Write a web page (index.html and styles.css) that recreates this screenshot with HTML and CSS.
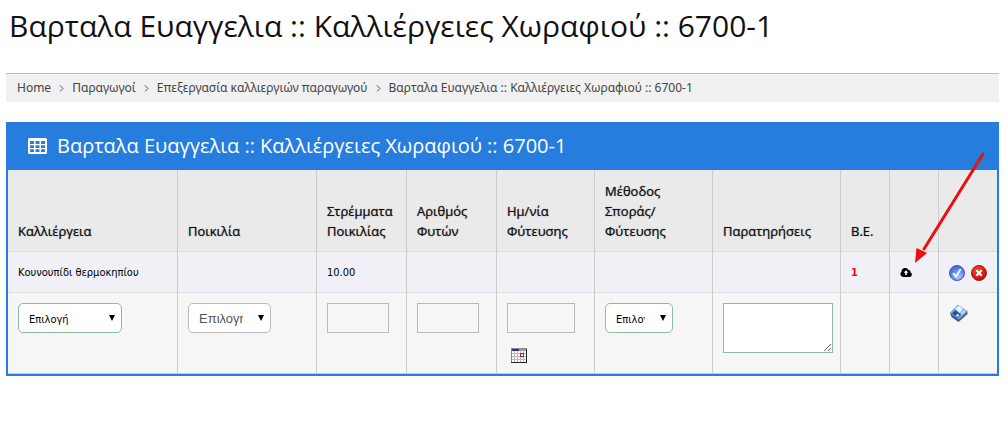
FILE: index.html
```html
<!DOCTYPE html>
<html lang="el">
<head>
<meta charset="utf-8">
<meta name="viewport" content="width=device-width, initial-scale=1">
<title>Βαρταλα Ευαγγελια :: Καλλιέργειες Χωραφιού :: 6700-1</title>
<link rel="stylesheet" href="styles.css">
</head>
<body>
<h1 class="page-title">Βαρταλα Ευαγγελια :: Καλλιέργειες Χωραφιού :: 6700-1</h1>
<nav class="breadcrumb" aria-label="Breadcrumb">
  <a href="#">Home</a>
  <svg class="chevron" viewBox="0 0 5 7"><path d="M1 .5 4 3.500 1 6.500"/></svg>
  <a href="#">Παραγωγοί</a>
  <svg class="chevron" viewBox="0 0 5 7"><path d="M1 .5 4 3.500 1 6.500"/></svg>
  <a href="#">Επεξεργασία καλλιεργιών παραγωγού</a>
  <svg class="chevron" viewBox="0 0 5 7"><path d="M1 .5 4 3.500 1 6.500"/></svg>
  <a href="#">Βαρταλα Ευαγγελια :: Καλλιέργειες Χωραφιού :: 6700-1</a>
</nav>
<section class="panel">
  <header class="panel-head">
    <svg class="table-icon" viewBox="0 0 19 16"><path fill="#fff" fill-rule="evenodd" d="M1.500 0h16A1.500 1.500 0 0 1 19 1.500v13a1.500 1.500 0 0 1-1.500 1.500h-16A1.500 1.500 0 0 1 0 14.500v-13A1.500 1.500 0 0 1 1.500 0ZM2 3v3h4V3ZM7.500 3v3h4V3ZM13 3v3h4V3ZM2 7.300v2.700h4V7.300ZM7.500 7.300v2.700h4V7.300ZM13 7.300v2.700h4V7.300ZM2 11.300v2.700h4v-2.700ZM7.500 11.300v2.700h4v-2.700ZM13 11.300v2.700h4v-2.700Z"/></svg>
    <h2 class="panel-title">Βαρταλα Ευαγγελια :: Καλλιέργειες Χωραφιού :: 6700-1</h2>
  </header>
  <table class="grid">
    <colgroup>
      <col class="c-crop"><col class="c-variety"><col class="c-num"><col class="c-num"><col class="c-date"><col class="c-method"><col class="c-notes"><col class="c-small"><col class="c-small"><col class="c-actions">
    </colgroup>
    <thead>
      <tr>
        <th scope="col">Καλλιέργεια</th>
        <th scope="col">Ποικιλία</th>
        <th scope="col">Στρέμματα Ποικιλίας</th>
        <th scope="col">Αριθμός Φυτών</th>
        <th scope="col">Ημ/νία Φύτευσης</th>
        <th scope="col">Μέθοδος Σποράς/ Φύτευσης</th>
        <th scope="col">Παρατηρήσεις</th>
        <th scope="col">Β.Ε.</th>
        <th></th>
        <th></th>
      </tr>
    </thead>
    <tbody>
      <tr class="row-data">
        <td>Κουνουπίδι θερμοκηπίου</td>
        <td></td>
        <td>10.00</td>
        <td></td>
        <td></td>
        <td></td>
        <td></td>
        <td class="alert">1</td>
        <td><button class="icon-btn" type="button" aria-label="Μεταφόρτωση"><svg width="12" height="10" viewBox="0 0 12 10"><path fill="#000" d="M3 9A3 3 0 0 1 1.500 3.700 3.700 3.700 0 0 1 8.500 2 2.300 2.300 0 0 1 10.600 4.500 2.400 2.400 0 0 1 9.600 9Z"/><path fill="#fff" d="M6 2.300 8.300 4.800H6.800V7H5.200V4.800H3.700Z"/></svg></button></td>
        <td>
          <div class="actions">
            <button class="icon-btn" type="button" aria-label="Επιβεβαίωση"><svg width="16" height="16" viewBox="0 0 16 16"><defs><radialGradient id="gb" cx=".6" cy=".75" r=".8"><stop offset="0" stop-color="#a9c4ff"/><stop offset=".6" stop-color="#5a82e6"/><stop offset="1" stop-color="#4264c8"/></radialGradient></defs><circle cx="8" cy="8" r="7.500" fill="url(#gb)" stroke="#3b58b4"/><path d="M4 8.300 7 11.500 11.700 4" fill="none" stroke="#eaf3ff" stroke-width="2"/></svg></button>
            <button class="icon-btn" type="button" aria-label="Διαγραφή"><svg width="16" height="16" viewBox="0 0 16 16"><defs><radialGradient id="gr" cx=".4" cy=".3" r=".8"><stop offset="0" stop-color="#ee4a30"/><stop offset=".6" stop-color="#d61e10"/><stop offset="1" stop-color="#a80c06"/></radialGradient></defs><circle cx="8" cy="8" r="7.500" fill="url(#gr)" stroke="#a31a10"/><path d="M5.300 5.300 10.700 10.700M10.700 5.300 5.300 10.700" stroke="#fff" stroke-width="2.200"/></svg></button>
          </div>
        </td>
      </tr>
      <tr class="row-form">
        <td><span class="select select-wide"><select aria-label="Καλλιέργεια"><option>Επιλογή</option></select></span></td>
        <td><span class="select select-muted"><select aria-label="Ποικιλία"><option>Επιλογή</option></select></span></td>
        <td><input class="field" type="text" aria-label="Στρέμματα Ποικιλίας"></td>
        <td><input class="field" type="text" aria-label="Αριθμός Φυτών"></td>
        <td>
          <input class="field field-date" type="text" aria-label="Ημ/νία Φύτευσης">
          <button class="icon-btn calendar" type="button" aria-label="Ημερολόγιο"><svg width="16" height="15" viewBox="0 0 16 15" shape-rendering="crispEdges"><path fill="#fff" d="M0 0h16v15H0z"/><path fill="#bcbcbc" d="M3 3h1v11H3zM6 3h1v11H6zM9 3h1v11H9zM12 3h1v11h-1zM1 5h14v1H1zM1 8h14v1H1zM1 11h14v1H1z"/><path fill="#9a9aa8" d="M0 0h16v3H0z"/><path fill="#33339a" d="M0 1h8v2H0z"/><path fill="#888" d="M0 0h16v1H0zM0 0h1v15H0z"/><path fill="#222" d="M15 1h1v14h-1zM0 14h16v1H0z"/><path fill="#fff" stroke="#a02030" d="M9.500 5.500h3v3h-3z"/></svg></button>
        </td>
        <td><span class="select select-narrow"><select aria-label="Μέθοδος Σποράς/Φύτευσης"><option>Επιλογή</option></select></span></td>
        <td><textarea class="notes" aria-label="Παρατηρήσεις"></textarea></td>
        <td></td>
        <td></td>
        <td><button class="icon-btn save" type="button" aria-label="Αποθήκευση"><svg width="20" height="18" viewBox="0 0 20 18"><path fill="#355f9c" d="M1 9 9 1 18.500 7.500V10L9.500 18 2.500 13Z"/><path fill="#7ba3d3" d="M1 9 9 1 18.500 7.500 10 15.500Z"/><path fill="#e4f3fb" d="M6 4.500 10 1.500 14 5 10.500 9Z"/><path fill="#b4d6ef" d="M11 9 15 5.500 17 7.500 13 11Z"/><path fill="#264f8f" d="M3 9.500 6.500 6.300 12 10.500 9 14Z"/><path fill="#b9d9f1" d="M6.500 11.500 8.500 9.500 10.500 11.300 9 13.300Z"/></svg></button></td>
      </tr>
    </tbody>
  </table>
  <svg class="arrow" width="72" height="114" viewBox="0 0 72 114" aria-hidden="true"><path d="M69 3 10 98" stroke="#f10d0d" stroke-width="3" stroke-linecap="round"/><path fill="#f10d0d" d="M1 112 2.500 97 13 102Z"/></svg>
</section>
</body>
</html>
```
FILE: styles.css
```css
* { box-sizing: border-box; }
body {
  margin: 0;
  padding: 6px 9px 20px 6px;
  background: #fff;
  color: #000;
  font: 11px/20px "DejaVu Sans Condensed", "Noto Sans", sans-serif;
}
.page-title {
  margin: 0 0 27px;
  padding-left: 3px;
  color: #111;
  font: 400 30px/40px "Open Sans", sans-serif;
}
.breadcrumb {
  display: flex;
  align-items: center;
  gap: 8px;
  margin-bottom: 20px;
  padding: 4px 11px;
  border-top: 1px solid #bbb;
  background: #f1f1f1;
  font: 12px/20px "Noto Sans", sans-serif;
}
.breadcrumb a { color: #444; text-decoration: none; white-space: nowrap; }
.chevron { width: 5px; height: 7px; fill: none; stroke: #555; }
.panel { position: relative; border: 2px solid #267ddd; }
.panel-head {
  display: flex;
  align-items: center;
  gap: 10px;
  padding: 7px 20px 9px;
  background: #267ddd;
}
.table-icon { width: 19px; height: 16px; }
.panel-title { margin: 0; color: #fff; font: 400 20px/30px "Open Sans", sans-serif; }
.grid { width: 100%; table-layout: fixed; border-collapse: separate; border-spacing: 0; }
.c-crop { width: 169px; }
.c-variety { width: 139px; }
.c-num { width: 90px; }
.c-date { width: 98px; }
.c-method { width: 118px; }
.c-notes { width: 128px; }
.c-small { width: 49px; }
.c-actions { width: 59px; }
.grid th, .grid td {
  padding: 10px;
  border-left: 1px solid #ccc;
  border-bottom: 1px dotted #ccc;
  text-align: left;
}
.grid th:first-child, .grid td:first-child { border-left: 0; }
.grid th {
  padding-top: 11px;
  vertical-align: bottom;
  background: #eaeaea;
  color: #111;
  font: 500 13px/20px "Open Sans", sans-serif;
  text-shadow: 0 0 1px #555;
}
.grid td { vertical-align: top; }
.grid .row-data td { padding-top: 11px; padding-bottom: 9px; background: #f0f0f6; }
.row-form td { height: 81px; background: #f6f6f6; border-bottom-style: solid; }
.grid .alert { color: #f10d0d; font-weight: bold; }
.icon-btn { display: flex; align-items: center; height: 20px; padding: 0; border: 0; background: none; }
.actions { display: flex; gap: 6px; }
.select { position: relative; display: block; }
.select::after {
  content: "";
  position: absolute;
  top: 12px;
  right: 7px;
  width: 6px;
  height: 6px;
  background: #000;
  clip-path: polygon(0 0, 100% 0, 50% 100%);
}
.select select {
  display: block;
  width: 100%;
  height: 30px;
  padding: 3px 27px 0 10px;
  appearance: none;
  border: 1px solid #8bbda2;
  border-radius: 5px;
  background: #fff;
  color: #000;
  font: inherit;
  text-overflow: clip;
}
.select-wide { width: 104px; }
.select-narrow { width: 68px; }
.select-muted { width: 83px; }
.select-muted select { padding-top: 0; border-color: #bbb; color: #555; font: 13px "Liberation Sans", sans-serif; }
.field {
  display: block;
  width: 62px;
  height: 30px;
  border: 1px solid #bbb;
  background: #f6f6f6;
}
.field-date { width: 68px; }
.calendar { margin: 12px 0 0 4px; }
.row-form td:nth-child(5) { padding-bottom: 8px; }
.notes {
  display: block;
  width: 110px;
  height: 50px;
  border: 1px solid #8bbda2;
  background: #fff;
}
.arrow { position: absolute; top: 27px; right: 11px; fill: none; pointer-events: none; }
```
